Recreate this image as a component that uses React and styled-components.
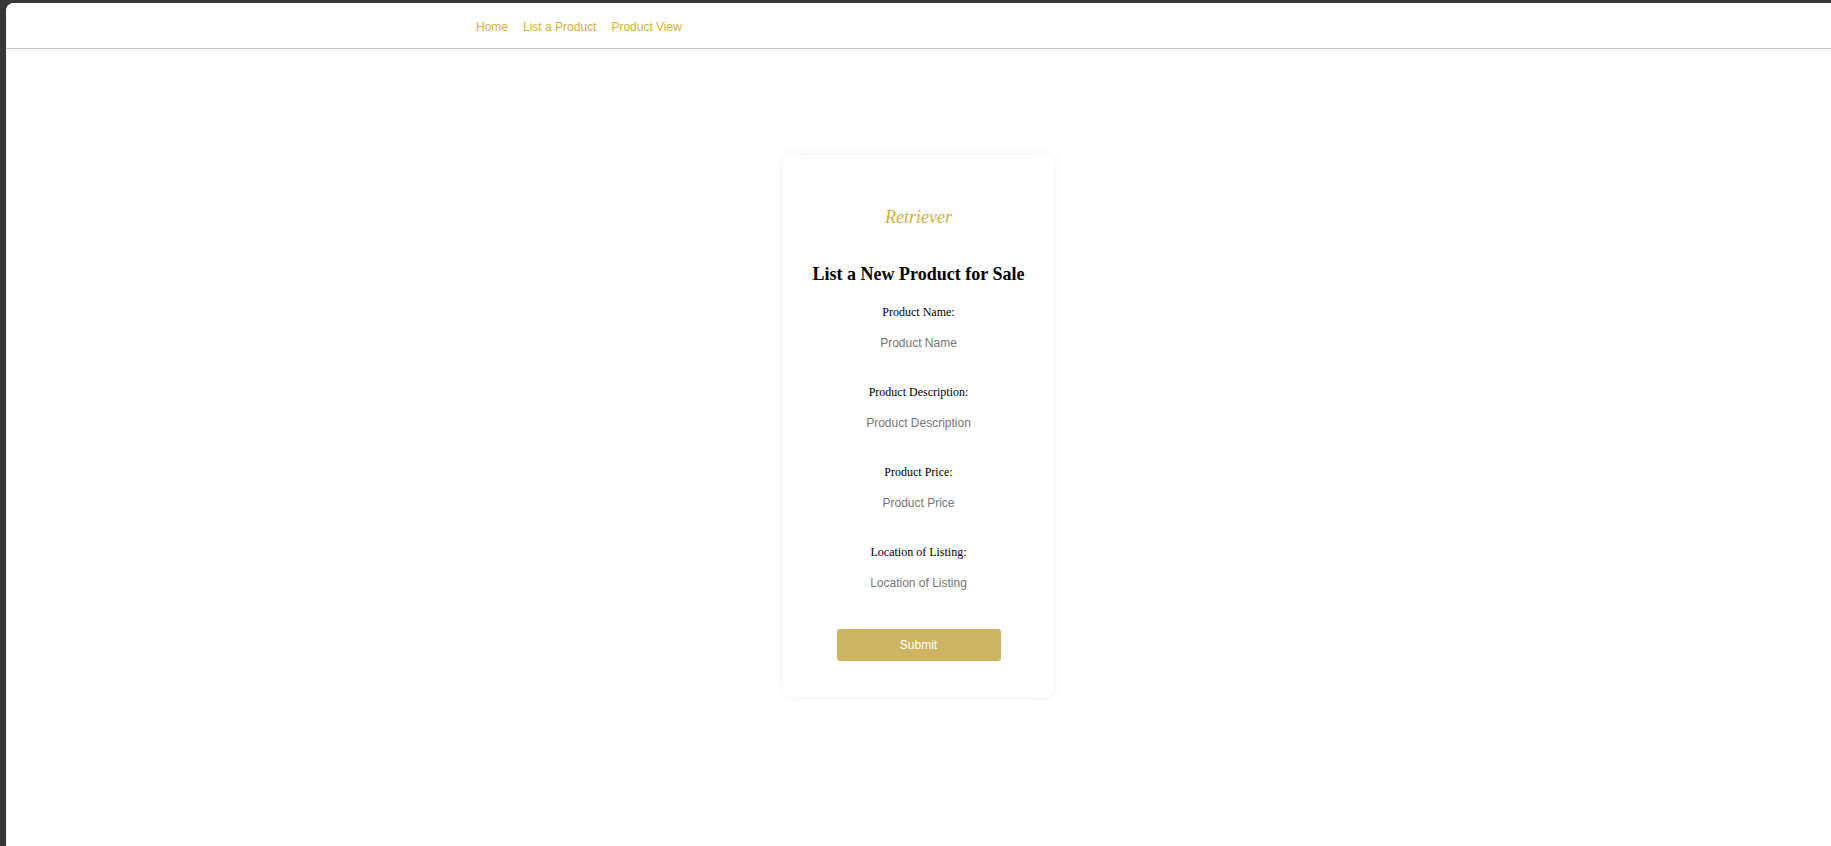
import React, { useState } from 'react';
import styled, { createGlobalStyle } from 'styled-components';

const GlobalStyle = createGlobalStyle`
  html, body {
    margin: 0;
    padding: 0;
    height: 100%;
    background: #383838;
    overflow: hidden;
  }
  #root {
    height: 100%;
  }
`;

const Frame = styled.div`
  margin: 3px 0 0 6px;
  height: calc(100% + 5px);
  background: #ffffff;
  border-radius: 8px 0 0 8px;
  overflow: hidden;
  display: flex;
  flex-direction: column;
`;

const Header = styled.header`
  height: 46px;
  box-sizing: border-box;
  padding: 17px 0 0 470px;
  border-bottom: 1px solid #c9c9c9;
  box-shadow: 0 1px 4px rgba(0, 0, 0, 0.08);
  background: #fff;
`;

const Nav = styled.nav`
  display: flex;
  gap: 15px;
`;

const NavLink = styled.a`
  font-family: 'Liberation Sans', Arial, sans-serif;
  font-size: 12px;
  line-height: 14px;
  color: #d2b03c;
  text-decoration: none;
  cursor: pointer;
`;

const Main = styled.main`
  display: flex;
  justify-content: center;
  padding-top: 106px;
`;

const Card = styled.form`
  width: 271px;
  box-sizing: border-box;
  padding: 51px 0 36px;
  background: #fff;
  border-radius: 8px;
  box-shadow: 0 0 12px rgba(0, 0, 0, 0.06);
  display: flex;
  flex-direction: column;
  align-items: center;
`;

const Logo = styled.div`
  font-family: 'Liberation Serif', 'Times New Roman', serif;
  font-style: italic;
  font-size: 18px;
  line-height: 22px;
  color: #d2b03c;
`;

const Title = styled.h3`
  margin: 35px 0 20px;
  font-family: 'Liberation Serif', 'Times New Roman', serif;
  font-weight: bold;
  font-size: 18px;
  line-height: 22px;
  color: #000;
`;

const Fields = styled.div`
  display: flex;
  flex-direction: column;
  align-items: center;
  gap: 30px;
`;

const Field = styled.div`
  display: flex;
  flex-direction: column;
  align-items: center;
  gap: 12px;
`;

const Label = styled.label`
  font-family: 'Liberation Serif', 'Times New Roman', serif;
  font-size: 12px;
  line-height: 14px;
  color: #000;
`;

const Input = styled.input`
  width: 200px;
  height: 24px;
  box-sizing: border-box;
  padding: 0;
  border: none;
  outline: none;
  background: transparent;
  text-align: center;
  font-family: 'Liberation Sans', Arial, sans-serif;
  font-size: 12px;
  color: #222;

  &::placeholder {
    color: #757575;
  }
`;

const SubmitButton = styled.button`
  margin-top: 34px;
  width: 164px;
  height: 32px;
  border: none;
  border-radius: 3px;
  background: #cdb462;
  color: #fff;
  font-family: 'Liberation Sans', Arial, sans-serif;
  font-size: 12px;
  cursor: pointer;
`;

const fields = [
  { id: 'name', label: 'Product Name:', placeholder: 'Product Name' },
  { id: 'description', label: 'Product Description:', placeholder: 'Product Description' },
  { id: 'price', label: 'Product Price:', placeholder: 'Product Price' },
  { id: 'location', label: 'Location of Listing:', placeholder: 'Location of Listing' },
];

const App = () => {
  const [values, setValues] = useState({});

  const handleChange = (e) => {
    setValues({ ...values, [e.target.name]: e.target.value });
  };

  const handleSubmit = (e) => {
    e.preventDefault();
  };

  return (
    <>
      <GlobalStyle />
      <Frame>
        <Header>
          <Nav>
            <NavLink>Home</NavLink>
            <NavLink>List a Product</NavLink>
            <NavLink>Product View</NavLink>
          </Nav>
        </Header>
        <Main>
          <Card onSubmit={handleSubmit}>
            <Logo>Retriever</Logo>
            <Title>List a New Product for Sale</Title>
            <Fields>
              {fields.map((f) => (
                <Field key={f.id}>
                  <Label htmlFor={f.id}>{f.label}</Label>
                  <Input
                    id={f.id}
                    name={f.id}
                    placeholder={f.placeholder}
                    value={values[f.id] || ''}
                    onChange={handleChange}
                  />
                </Field>
              ))}
            </Fields>
            <SubmitButton type="submit">Submit</SubmitButton>
          </Card>
        </Main>
      </Frame>
    </>
  );
};

export default App;
